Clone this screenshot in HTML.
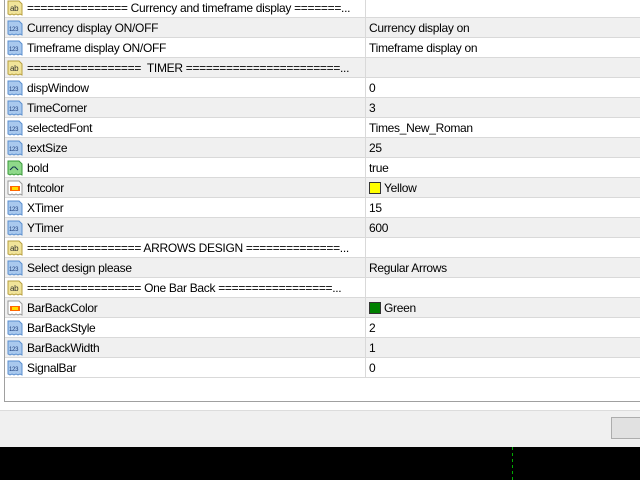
<!DOCTYPE html>
<html><head><style>
*{margin:0;padding:0;box-sizing:border-box}
body{width:640px;height:480px;overflow:hidden;background:#fff;font-family:"Liberation Sans",sans-serif;font-size:12px;letter-spacing:-0.3px;color:#000;position:relative}
.list{position:absolute;left:4px;top:-2px;width:640px;height:404px;border-left:1px solid #a0a0a0;border-bottom:1px solid #a0a0a0;background:#fff}
.row{position:absolute;left:0;width:640px;height:20px;border-bottom:1px solid #d9d9d9}
.row.g{background:#f0f0f0}
.row .n{position:absolute;left:22px;top:3px;white-space:nowrap;width:334px;overflow:hidden}
.row .v{position:absolute;left:360px;top:0;height:19px;border-left:1px solid #d9d9d9;padding-left:3px;padding-top:3px;width:280px;white-space:nowrap}
.ic{position:absolute;left:2px;top:2px;width:16px;height:16px}
.sw{display:inline-block;width:12px;height:12px;border:1px solid #333;vertical-align:-2px;margin-right:3px}
.foot{position:absolute;left:0;top:410px;width:640px;height:37px;background:#f0f0f0;border-top:1px solid #dcdcdc}
.btn{position:absolute;left:611px;top:417px;width:40px;height:22px;background:#e1e1e1;border:1px solid #adadad}
.blk{position:absolute;left:0;top:447px;width:640px;height:33px;background:#000}
.dash{position:absolute;left:512px;top:447px;width:1px;height:33px;background:repeating-linear-gradient(#0a0 0 3px,transparent 3px 6px)}
</style></head><body>
<div class="list">
<div class="row" style="top:0"><svg class="ic" viewBox="0 0 16 16"><path d="M1 1h11l3 3v11l-2-1-2 1-2-1-2 1-2-1-2 1-2-1z" fill="#f1e49a" stroke="#b8a040"/><text x="3" y="11" font-size="8" font-family="Liberation Sans" fill="#333">ab</text></svg><span class="n">=============== Currency and timeframe display =======...</span><span class="v"></span></div>
<div class="row g" style="top:20px"><svg class="ic" viewBox="0 0 16 16"><path d="M1 1h11l3 3v11l-2-1-2 1-2-1-2 1-2-1-2 1-2-1z" fill="#a9c9ee" stroke="#5b8fcf"/><text x="2" y="11" font-size="6" font-family="Liberation Sans" fill="#1d3d7a">123</text></svg><span class="n">Currency display ON/OFF</span><span class="v">Currency display on</span></div>
<div class="row" style="top:40px"><svg class="ic" viewBox="0 0 16 16"><path d="M1 1h11l3 3v11l-2-1-2 1-2-1-2 1-2-1-2 1-2-1z" fill="#a9c9ee" stroke="#5b8fcf"/><text x="2" y="11" font-size="6" font-family="Liberation Sans" fill="#1d3d7a">123</text></svg><span class="n">Timeframe display ON/OFF</span><span class="v">Timeframe display on</span></div>
<div class="row g" style="top:60px"><svg class="ic" viewBox="0 0 16 16"><path d="M1 1h11l3 3v11l-2-1-2 1-2-1-2 1-2-1-2 1-2-1z" fill="#f1e49a" stroke="#b8a040"/><text x="3" y="11" font-size="8" font-family="Liberation Sans" fill="#333">ab</text></svg><span class="n">=================&nbsp; TIMER =======================...</span><span class="v"></span></div>
<div class="row" style="top:80px"><svg class="ic" viewBox="0 0 16 16"><path d="M1 1h11l3 3v11l-2-1-2 1-2-1-2 1-2-1-2 1-2-1z" fill="#a9c9ee" stroke="#5b8fcf"/><text x="2" y="11" font-size="6" font-family="Liberation Sans" fill="#1d3d7a">123</text></svg><span class="n">dispWindow</span><span class="v">0</span></div>
<div class="row g" style="top:100px"><svg class="ic" viewBox="0 0 16 16"><path d="M1 1h11l3 3v11l-2-1-2 1-2-1-2 1-2-1-2 1-2-1z" fill="#a9c9ee" stroke="#5b8fcf"/><text x="2" y="11" font-size="6" font-family="Liberation Sans" fill="#1d3d7a">123</text></svg><span class="n">TimeCorner</span><span class="v">3</span></div>
<div class="row" style="top:120px"><svg class="ic" viewBox="0 0 16 16"><path d="M1 1h11l3 3v11l-2-1-2 1-2-1-2 1-2-1-2 1-2-1z" fill="#a9c9ee" stroke="#5b8fcf"/><text x="2" y="11" font-size="6" font-family="Liberation Sans" fill="#1d3d7a">123</text></svg><span class="n">selectedFont</span><span class="v">Times_New_Roman</span></div>
<div class="row g" style="top:140px"><svg class="ic" viewBox="0 0 16 16"><path d="M1 1h11l3 3v11l-2-1-2 1-2-1-2 1-2-1-2 1-2-1z" fill="#a9c9ee" stroke="#5b8fcf"/><text x="2" y="11" font-size="6" font-family="Liberation Sans" fill="#1d3d7a">123</text></svg><span class="n">textSize</span><span class="v">25</span></div>
<div class="row" style="top:160px"><svg class="ic" viewBox="0 0 16 16"><path d="M1 1h11l3 3v11l-2-1-2 1-2-1-2 1-2-1-2 1-2-1z" fill="#8fd98a" stroke="#3a9a3a"/><path d="M3 10l3-3h2l3 3" stroke="#135" fill="none"/></svg><span class="n">bold</span><span class="v">true</span></div>
<div class="row g" style="top:180px"><svg class="ic" viewBox="0 0 16 16"><path d="M1 1h11l3 3v11l-2-1-2 1-2-1-2 1-2-1-2 1-2-1z" fill="#fff" stroke="#999"/><rect x="3" y="6" width="10" height="5" fill="#f60"/><rect x="5" y="7" width="6" height="3" fill="#fd0"/></svg><span class="n">fntcolor</span><span class="v"><span class="sw" style="background:#ff0"></span>Yellow</span></div>
<div class="row" style="top:200px"><svg class="ic" viewBox="0 0 16 16"><path d="M1 1h11l3 3v11l-2-1-2 1-2-1-2 1-2-1-2 1-2-1z" fill="#a9c9ee" stroke="#5b8fcf"/><text x="2" y="11" font-size="6" font-family="Liberation Sans" fill="#1d3d7a">123</text></svg><span class="n">XTimer</span><span class="v">15</span></div>
<div class="row g" style="top:220px"><svg class="ic" viewBox="0 0 16 16"><path d="M1 1h11l3 3v11l-2-1-2 1-2-1-2 1-2-1-2 1-2-1z" fill="#a9c9ee" stroke="#5b8fcf"/><text x="2" y="11" font-size="6" font-family="Liberation Sans" fill="#1d3d7a">123</text></svg><span class="n">YTimer</span><span class="v">600</span></div>
<div class="row" style="top:240px"><svg class="ic" viewBox="0 0 16 16"><path d="M1 1h11l3 3v11l-2-1-2 1-2-1-2 1-2-1-2 1-2-1z" fill="#f1e49a" stroke="#b8a040"/><text x="3" y="11" font-size="8" font-family="Liberation Sans" fill="#333">ab</text></svg><span class="n">================= ARROWS DESIGN ==============...</span><span class="v"></span></div>
<div class="row g" style="top:260px"><svg class="ic" viewBox="0 0 16 16"><path d="M1 1h11l3 3v11l-2-1-2 1-2-1-2 1-2-1-2 1-2-1z" fill="#a9c9ee" stroke="#5b8fcf"/><text x="2" y="11" font-size="6" font-family="Liberation Sans" fill="#1d3d7a">123</text></svg><span class="n">Select design please</span><span class="v">Regular Arrows</span></div>
<div class="row" style="top:280px"><svg class="ic" viewBox="0 0 16 16"><path d="M1 1h11l3 3v11l-2-1-2 1-2-1-2 1-2-1-2 1-2-1z" fill="#f1e49a" stroke="#b8a040"/><text x="3" y="11" font-size="8" font-family="Liberation Sans" fill="#333">ab</text></svg><span class="n">================= One Bar Back =================...</span><span class="v"></span></div>
<div class="row g" style="top:300px"><svg class="ic" viewBox="0 0 16 16"><path d="M1 1h11l3 3v11l-2-1-2 1-2-1-2 1-2-1-2 1-2-1z" fill="#fff" stroke="#999"/><rect x="3" y="6" width="10" height="5" fill="#f60"/><rect x="5" y="7" width="6" height="3" fill="#fd0"/></svg><span class="n">BarBackColor</span><span class="v"><span class="sw" style="background:#008000"></span>Green</span></div>
<div class="row" style="top:320px"><svg class="ic" viewBox="0 0 16 16"><path d="M1 1h11l3 3v11l-2-1-2 1-2-1-2 1-2-1-2 1-2-1z" fill="#a9c9ee" stroke="#5b8fcf"/><text x="2" y="11" font-size="6" font-family="Liberation Sans" fill="#1d3d7a">123</text></svg><span class="n">BarBackStyle</span><span class="v">2</span></div>
<div class="row g" style="top:340px"><svg class="ic" viewBox="0 0 16 16"><path d="M1 1h11l3 3v11l-2-1-2 1-2-1-2 1-2-1-2 1-2-1z" fill="#a9c9ee" stroke="#5b8fcf"/><text x="2" y="11" font-size="6" font-family="Liberation Sans" fill="#1d3d7a">123</text></svg><span class="n">BarBackWidth</span><span class="v">1</span></div>
<div class="row" style="top:360px"><svg class="ic" viewBox="0 0 16 16"><path d="M1 1h11l3 3v11l-2-1-2 1-2-1-2 1-2-1-2 1-2-1z" fill="#a9c9ee" stroke="#5b8fcf"/><text x="2" y="11" font-size="6" font-family="Liberation Sans" fill="#1d3d7a">123</text></svg><span class="n">SignalBar</span><span class="v">0</span></div>
</div>
<div class="foot"></div>
<div class="btn"></div>
<div class="blk"></div>
<div class="dash"></div>
</body></html>
